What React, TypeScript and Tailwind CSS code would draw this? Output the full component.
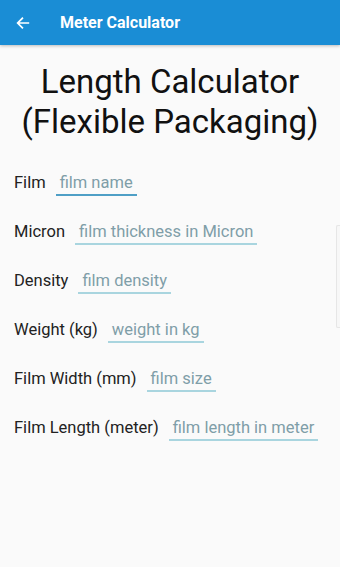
import React from "react";

const rows = [
  { label: "Film", hint: "film name", focused: true },
  { label: "Micron", hint: "film thickness in Micron" },
  { label: "Density", hint: "film density" },
  { label: "Weight (kg)", hint: "weight in kg" },
  { label: "Film Width (mm)", hint: "film size" },
  { label: "Film Length (meter)", hint: "film length in meter" },
];

export default function App() {
  return (
    <div
      className="relative w-[340px] h-[567px] bg-[#fafafa] overflow-hidden"
      style={{ fontFamily: "Roboto, 'Noto Sans', sans-serif" }}
    >
      <div className="h-[45px] bg-[#1a8dd5] flex items-center shadow-[0_1px_3px_rgba(0,0,0,0.25)]">
        <svg className="ml-[15px]" width="16" height="16" viewBox="0 0 24 24" fill="none" stroke="white" strokeWidth="2.6" strokeLinecap="square">
          <path d="M20 12H5M11 5l-7 7 7 7" />
        </svg>
        <span className="ml-[29px] text-white text-[16px] font-bold">Meter Calculator</span>
      </div>
      <div className="pt-[17px] text-center text-[33px] leading-[40px] text-[#111]">
        <div>Length Calculator</div>
        <div>(Flexible Packaging)</div>
      </div>
      <div className="mt-[17px] pl-[14px] flex flex-col">
        {rows.map((r) => (
          <div key={r.label} className="h-[49px] flex items-center text-[16.5px] leading-[22px]">
            <span className="text-[#222] border-b-2 border-transparent">{r.label}</span>
            <span
              className={`ml-[10px] px-[4px] border-b-2 ${
                r.focused ? "border-[#4f9fc6]" : "border-[#a9d5df]"
              } text-[#7f9ea8]`}
            >
              {r.hint}
            </span>
          </div>
        ))}
      </div>
      <div className="absolute right-0 top-[225px] w-[4px] h-[103px] border-l border-t border-b border-[#e6e6e6] rounded-l-[2px] bg-[#f7f7f7]" />
    </div>
  );
}
